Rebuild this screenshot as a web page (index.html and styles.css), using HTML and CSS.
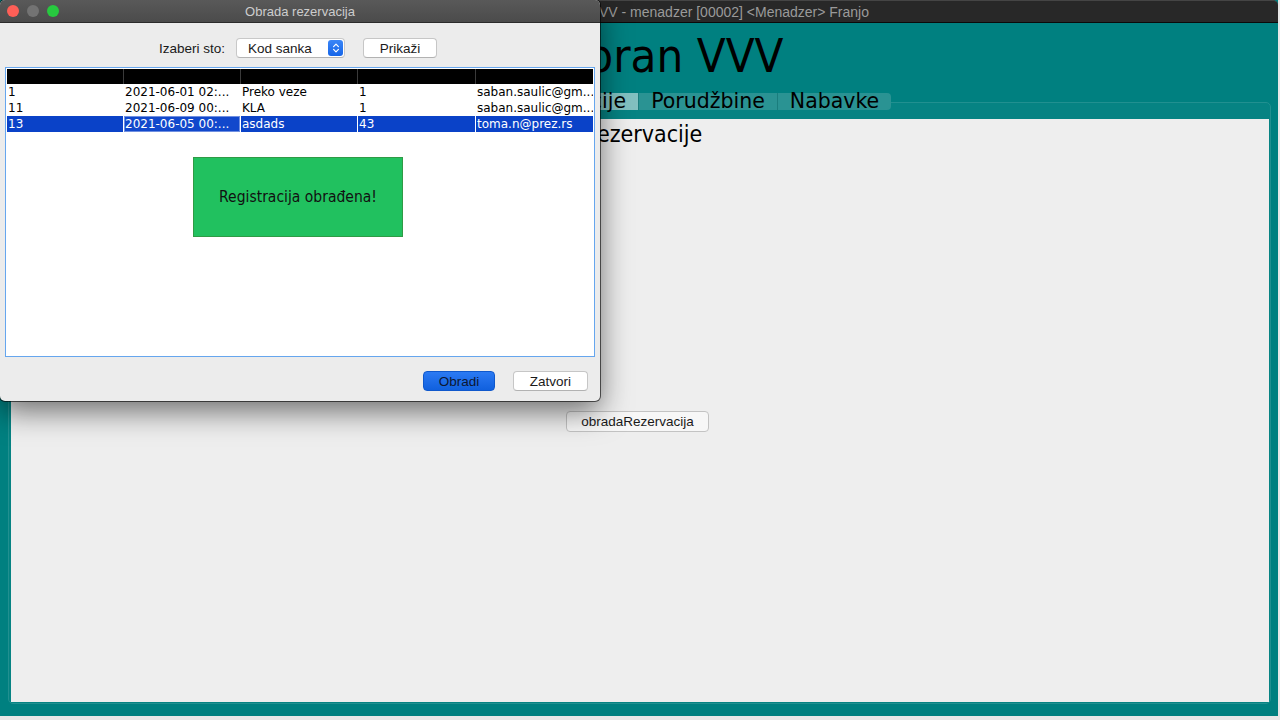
FILE: index.html
```html
<!DOCTYPE html>
<html lang="sr">
<head>
<meta charset="utf-8">
<title>Obrada rezervacija</title>
<link rel="stylesheet" href="styles.css">
</head>
<body>
<div class="bgwin">
  <div class="bg-titlebar"><span class="bg-title">Restoran VVV - menadzer [00002] &lt;Menadzer&gt; Franjo</span></div>
  <div class="bg-body">
    <div class="app-title">Restoran VVV</div>
    <div class="tabs">
      <div class="tab">Jelovnik</div>
      <div class="tab active">Rezervacije</div>
      <div class="tab">Porudžbine</div>
      <div class="tab">Nabavke</div>
    </div>
    <div class="tab-frame">
      <div class="tab-content">
        <div class="section-label">Rezervacije</div>
        <button class="bg-button">obradaRezervacija</button>
      </div>
    </div>
  </div>
</div>

<div class="dialog">
  <div class="dlg-titlebar">
    <div class="lights">
      <span class="light red"></span>
      <span class="light gray"></span>
      <span class="light green"></span>
    </div>
    <div class="dlg-title">Obrada rezervacija</div>
    <div></div>
  </div>
  <div class="dlg-controls">
    <span class="ctl-label">Izaberi sto:</span>
    <div class="select">
      <span class="select-text">Kod sanka</span>
      <span class="stepper"><svg width="8" height="12" viewBox="0 0 8 12"><path d="M1.6 4.6 L4 2.2 L6.4 4.6 M1.6 7.4 L4 9.8 L6.4 7.4" stroke="#fff" stroke-width="1.2" fill="none" stroke-linecap="round" stroke-linejoin="round"/></svg></span>
    </div>
    <button class="btn btn-show">Prikaži</button>
  </div>
  <div class="pane">
    <div class="grid-row head">
      <div class="cell"></div><div class="cell"></div><div class="cell"></div><div class="cell"></div><div class="cell"></div>
    </div>
    <div class="grid-row">
      <div class="cell">1</div><div class="cell">2021-06-01 02:...</div><div class="cell">Preko veze</div><div class="cell">1</div><div class="cell">saban.saulic@gm...</div>
    </div>
    <div class="grid-row">
      <div class="cell">11</div><div class="cell">2021-06-09 00:...</div><div class="cell">KLA</div><div class="cell">1</div><div class="cell">saban.saulic@gm...</div>
    </div>
    <div class="grid-row selected">
      <div class="cell">13</div><div class="cell focus">2021-06-05 00:...</div><div class="cell">asdads</div><div class="cell">43</div><div class="cell">toma.n@prez.rs</div>
    </div>
    <div class="toast">Registracija obrađena!</div>
  </div>
  <div class="dlg-footer">
    <button class="btn btn-primary">Obradi</button>
    <button class="btn btn-close">Zatvori</button>
  </div>
</div>
</body>
</html>
```

FILE: styles.css
```css
* { box-sizing: border-box; margin: 0; padding: 0; }

html, body {
  width: 1280px;
  height: 720px;
  overflow: hidden;
}

body {
  position: relative;
  background: #e8e8e8;
  font-family: "Liberation Sans", Arial, sans-serif;
  color: #1a1a1a;
}

/* ---------- background main window ---------- */
.bgwin {
  width: 1278px;
  height: 716px;
  display: flex;
  flex-direction: column;
  background: #008080;
}

.bg-titlebar {
  flex: none;
  height: 23px;
  background: #282828;
  border-top: 1px solid #454545;
  border-bottom: 1px solid #0a0a0a;
  border-radius: 5px 5px 0 0;
  display: flex;
  align-items: center;
  justify-content: flex-end;
  padding-right: 409px;
}

.bg-title {
  font-size: 14px;
  color: #9a9a9a;
  white-space: nowrap;
}

.bg-body {
  flex: 1;
  display: flex;
  flex-direction: column;
  padding: 5px 7px 12px 8px;
}

.app-title {
  font-family: "DejaVu Sans Condensed", "DejaVu Sans", sans-serif;
  font-stretch: condensed;
  font-size: 47px;
  line-height: 56px;
  text-align: center;
  color: #000;
}

.tabs {
  display: flex;
  justify-content: center;
  margin-top: 9px;
  height: 17px;
  padding-left: 4px;
}

.tab {
  position: relative;
  font-family: "DejaVu Sans", sans-serif;
  font-size: 20.5px;
  line-height: 17px;
  height: 17px;
  padding: 0 12px;
  background: #2a9393;
  border-left: 1px solid #1a7d7d;
  color: #000;
  white-space: nowrap;
}

.tab:first-child { border-left: none; border-radius: 4px 0 0 4px; }
.tab:last-child { border-radius: 0 4px 4px 0; }
.tab.active { background: #82c0c0; }

.tab-frame {
  flex: 1;
  display: flex;
  margin-top: -8px;
  border: 1px solid #219090;
  border-radius: 5px;
  background: #068383;
  padding: 16px 1px 1px 2px;
}

.tab-content {
  flex: 1;
  background: #eeeeee;
  display: flex;
  flex-direction: column;
  align-items: center;
}

.section-label {
  font-family: "DejaVu Sans Condensed", "DejaVu Sans", sans-serif;
  font-stretch: condensed;
  font-size: 23px;
  line-height: 28px;
  margin-top: 1px;
  margin-left: 6px;
  color: #000;
}

.bg-button {
  margin-top: 263px;
  margin-right: 5px;
  width: 143px;
  height: 21px;
  font-family: "Liberation Sans", Arial, sans-serif;
  font-size: 13.5px;
  color: #1a1a1a;
  background: #f7f7f7;
  border: 1px solid #c3c3c3;
  border-radius: 4px;
}

/* ---------- dialog window ---------- */
.dialog {
  position: absolute;
  z-index: 10;
  left: 0;
  top: 0;
  width: 600px;
  height: 401px;
  background: #ececec;
  border-radius: 5px;
  overflow: hidden;
  box-shadow: 0 0 0 1px rgba(0, 0, 0, 0.6), 0 10px 30px rgba(0, 0, 0, 0.55);
  display: flex;
  flex-direction: column;
}

.dlg-titlebar {
  flex: none;
  height: 23px;
  background: linear-gradient(#595959, #4b4b4b);
  border-bottom: 1px solid #2b2b2b;
  display: grid;
  grid-template-columns: 1fr auto 1fr;
  align-items: center;
}

.lights {
  display: flex;
  gap: 8px;
  padding-left: 7px;
}

.light {
  width: 12px;
  height: 12px;
  border-radius: 50%;
}

.light.red { background: #fe5f57; }
.light.gray { background: #737373; }
.light.green { background: #27c93f; }

.dlg-title {
  font-size: 13px;
  color: #cdcdcd;
}

.dlg-controls {
  flex: none;
  display: flex;
  justify-content: center;
  align-items: center;
  height: 20px;
  margin-top: 15px;
  padding-right: 4px;
}

.ctl-label {
  font-size: 13.5px;
  color: #1a1a1a;
  margin-right: 11px;
}

.select {
  width: 109px;
  height: 20px;
  display: flex;
  align-items: center;
  justify-content: space-between;
  background: #fff;
  border: 1px solid #c8c8c8;
  border-bottom-color: #b4b4b4;
  border-radius: 4px;
  padding: 0 1px 0 11px;
}

.select-text {
  font-size: 13.5px;
  color: #1a1a1a;
}

.stepper {
  width: 15px;
  height: 16px;
  border-radius: 3px;
  background: linear-gradient(#3b86f7, #1565e8);
  display: flex;
  align-items: center;
  justify-content: center;
}

.btn {
  font-family: "Liberation Sans", Arial, sans-serif;
  font-size: 13.5px;
  height: 20px;
  border-radius: 4px;
  color: #1a1a1a;
  background: #fff;
  border: 1px solid #c6c6c6;
  border-bottom-color: #b2b2b2;
}

.btn-show {
  width: 74px;
  margin-left: 18px;
}

.pane {
  position: relative;
  flex: none;
  height: 290px;
  margin: 9px 5px 0 5px;
  border: 1px solid #66a6ee;
  background: #fff;
  padding: 1px;
}

.grid-row {
  display: grid;
  grid-template-columns: 116px 117px 117px 118px 118px;
  height: 16px;
  font-family: "DejaVu Sans", sans-serif;
  font-size: 12px;
  line-height: 16px;
  color: #000;
}

.grid-row.head {
  height: 15px;
  background: #000;
}

.cell {
  padding: 0 1px;
  white-space: nowrap;
  overflow: hidden;
}

.cell + .cell { border-left: 1px solid #fff; }
.grid-row.head .cell + .cell { border-left-color: #3a3a3a; }

.grid-row.selected {
  background: #0a42c8;
  color: #fff;
}

.grid-row.selected .cell.focus {
  background: #1148cc;
  box-shadow: inset 0 0 0 1px #6f8fe0;
}

.toast {
  position: absolute;
  left: 187px;
  top: 89px;
  width: 210px;
  height: 80px;
  display: flex;
  align-items: center;
  justify-content: center;
  background: #21c15f;
  border: 1px solid #2f9b45;
  font-family: "DejaVu Sans Condensed", "DejaVu Sans", sans-serif;
  font-stretch: condensed;
  font-size: 15.5px;
  color: #111;
}

.dlg-footer {
  flex: none;
  display: flex;
  justify-content: flex-end;
  gap: 18px;
  padding: 14px 12px 0 0;
}

.btn-primary {
  width: 72px;
  background: linear-gradient(#2b7af3, #1060de);
  border: 1px solid #0f58cc;
  color: #0c1733;
}

.btn-close {
  width: 75px;
}
```
